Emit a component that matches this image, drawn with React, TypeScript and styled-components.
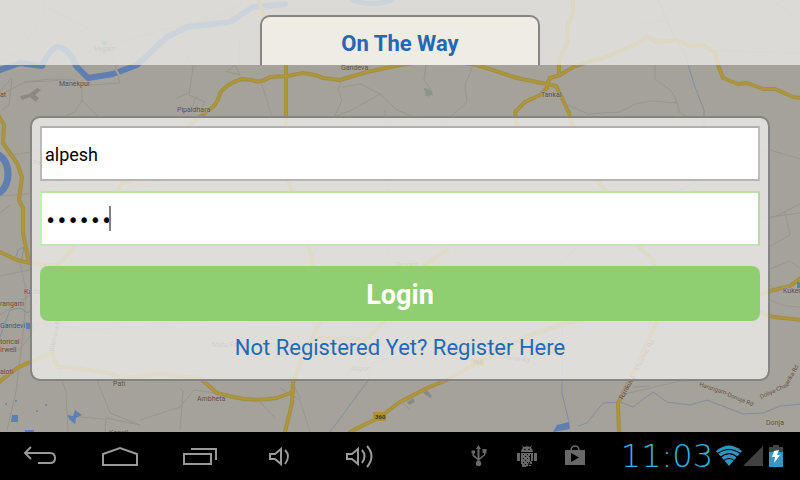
import React, { useState } from "react";
import styled, { createGlobalStyle } from "styled-components";

const GlobalStyle = createGlobalStyle`
  *, *::before, *::after { box-sizing: border-box; }
  body { margin: 0; background: #000; font-family: Roboto, sans-serif; }
`;

const Screen = styled.div`
  min-height: 100vh;
  display: flex;
  flex-direction: column;
`;

const Content = styled.div`
  position: relative;
  flex: 1;
  display: flex;
  flex-direction: column;
  overflow: hidden;
  background: #a5a29a;
`;

const MapSvg = styled.svg`
  position: absolute;
  inset: 0;
  width: 100%;
  height: 100%;
  font-family: Roboto, sans-serif;
`;

const Header = styled.header`
  position: relative;
  display: flex;
  justify-content: center;
  padding-top: 15px;
  background: rgba(233, 232, 229, 0.8);
`;

const TitleTab = styled.h1`
  width: 35%;
  min-width: 200px;
  height: 50px;
  margin: 0;
  padding-top: 2px;
  border: 2px solid #858585;
  border-bottom: 0;
  border-radius: 10px 10px 0 0;
  background: #efece4;
  color: #2169b7;
  font-size: 22px;
  font-weight: 700;
  line-height: 50px;
  text-align: center;
`;

const Panel = styled.form`
  position: relative;
  display: flex;
  flex-direction: column;
  margin: 51px 30px;
  padding: 8px 8px 14px;
  border: 2px solid #858585;
  border-radius: 10px;
  background: rgba(236, 236, 234, 0.8);
  background-clip: padding-box;
`;

const Field = styled.label`
  position: relative;
  display: flex;
  margin-bottom: 10px;
`;

const TextInput = styled.input<{ $active?: boolean }>`
  width: 100%;
  height: 55px;
  padding: 2px 3px 0;
  border: 2px solid;
  border-color: ${(p) => (p.$active ? "#b9e0a8 #b5dba4 #c2e5b3 #c6efb6" : "#b0b0b0 #bcbcbc #b4b4b4 #b8b8b8")};
  border-radius: 0;
  outline: 0;
  background: #fff;
  color: #000;
  caret-color: transparent;
  font-family: ${(p) => (p.$active ? '"DejaVu Sans"' : "Roboto")}, sans-serif;
  font-size: ${(p) => (p.$active ? "19px" : "18px")};
`;

const Caret = styled.span`
  position: absolute;
  left: 69px;
  top: 15px;
  width: 2px;
  height: 25px;
  background: #808080;
`;

const LoginButton = styled.button`
  height: 55px;
  margin-top: 10px;
  padding: 2px 0 0;
  border: 0;
  border-radius: 8px;
  background: #8fcf72;
  color: #fff;
  font-family: Roboto, sans-serif;
  font-size: 27px;
  font-weight: 700;
`;

const RegisterLink = styled.a`
  align-self: center;
  margin-top: 10px;
  color: #2169b7;
  font-size: 22px;
  line-height: 34px;
  text-decoration: none;
`;

const SystemBar = styled.footer`
  display: flex;
  align-items: center;
  justify-content: space-between;
  height: 48px;
  background: #000;
`;

const NavKeys = styled.nav`
  display: flex;
`;

const NavKey = styled.button`
  display: grid;
  place-items: center;
  width: 80px;
  height: 48px;
  padding: 0;
  border: 0;
  background: none;
  color: #999;
`;

const Status = styled.div`
  display: flex;
  align-items: center;
  padding-right: 17px;
  color: #686868;
`;

const Notice = styled.span`
  display: grid;
  place-items: center;
  width: 48px;
  height: 48px;
`;

const Clock = styled.time`
  width: 116px;
  padding-right: 2px;
  color: #33b5e5;
  font-family: "DejaVu Sans Light", "DejaVu Sans ExtraLight", "DejaVu Sans", sans-serif;
  font-size: 32px;
  font-weight: 200;
  line-height: 48px;
  text-align: right;
`;

const Battery = styled.svg`
  margin-left: 6px;
`;

const yellowRoads = [
  "M-3 113L4 125L3 143L17 163L22 177L19 200L23 208L23 233L29 263",
  "M0 252L17 260L30 263L47 265L58 265L72 250L95 215L117 192L122 183L133 180L160 158L187 127L200 117L213 107Q218 102 220 93Q226 84 242 79L252 80Q260 84 270 77L287 76L303 73Q318 75 323 78L340 80L367 72L400 65L440 60L477 65L517 78L547 84L556 86L562 98L569 113L573 127L597 180L607 192L638 246L653 260L657 290L657 322L648 340L630 380L618 403L619 432",
  "M547 84L550 78L560 75L575 66L608 56L640 42L647 36L656 42L677 40L690 46L703 45L715 53L718 65L723 78L738 84L747 83L763 89L775 89L793 97L802 98",
  "M559 74L559 60L568 42L567 27L573 13L573 0",
  "M547 84L547 88L540 95L525 102L515 112L517 127",
  "M259 0L263 15L286 50L286 115L288 180L310 250L318 290L320 322L300 363L293 383L292 403L285 432",
  "M-2 383L17 368L30 362L52 353L57 367L67 367L110 373L123 378L160 374L200 378L217 393L233 397Q253 402 277 398L293 392",
  "M318 338L367 339L383 322L423 266L447 250",
  "M350 432L380 417L400 402L427 388L447 380L477 363L530 335L570 322L650 308L760 295L770 291L790 286L802 277",
  "M740 303L760 312L773 317L802 320",
];

const greyRoads = [
  "M0 95L25 82L50 81L62 80M25 82L50 79L75 80M90 85L120 83L117 72L110 45M82 87L82 100L75 112L66 116M82 100L100 119L120 135",
  "M110 45L90 30L62 15L42 6M43 0L44 15L20 50L0 62M110 45L170 28L215 18L240 5",
  "M186 55L193 67L189 95L205 102L200 112M190 92L177 98M196 96L193 106M240 35L239 60",
  "M226 72L235 65L240 75L228 72M0 91L12 78L9 105L2 110",
  "M262 85L272 117M342 78L338 90L342 100L335 116M343 87L361 84L380 94L397 110L428 123M380 94L352 110L337 116",
  "M426 65L424 80L432 92L428 98M472 68L465 85L467 102L455 113L440 125",
  "M655 65L655 79L670 90L675 97L680 113L686 116M568 105L588 114L620 112L635 104L650 101L677 103",
  "M0 157L30 152L80 142M0 196L28 194L70 180M0 213L10 205M70 150L280 142M85 207L180 175L320 168",
  "M0 276L29 270M20 262L26 290L24 325L21 350L16 392L7 430M0 315L30 295L35 330L19 350M22 322L90 330L220 320L390 325",
  "M57 367L66 392L68 432M97 380L105 400L110 413L140 425L106 418L105 432M140 420L180 407L194 390L230 395M81 417L104 419",
  "M280 388L300 400L310 432M293 383L300 398M275 418L260 402M400 400L410 410M720 152L770 150L800 159M740 218L770 217L800 213M720 228L770 219L800 204M763 250L790 235L785 212M770 300L785 306L800 307",
  "M620 395L655 387L680 381L760 380M633 387L650 386M610 0L630 15L638 25L665 20M775 2L800 20M715 50L750 52L800 53",
  "M55 228L120 238L260 226L350 235M180 430L183 391L180 388M385 110L390 280L350 340M770 269L790 261L800 268M770 285L779 293",
];

const thinStreams = [
  "M658 0L673 33L685 55L695 87L704 110L704 140",
  "M578 426L587 423L603 403L620 402L633 407L653 392L667 402L690 405L707 400L743 414L763 413L780 406L802 404",
  "M562 327L562 393L569 422",
  "M330 432L367 382L373 363L388 358",
  "M0 337L10 310L20 308L28 313L38 300",
  "M16 256L18 250L24 247L22 258",
  "M520 295L580 246L640 210L700 180",
];

type Label = [text: string, x: number, y: number, size?: number];
const labels: Label[] = [
  ["Manekpur", 59, 86, 7], ["Vegam", 94, 51, 7], ["Pipaldhara", 177, 112, 7], ["Gandeva", 341, 70, 7],
  ["Tankal", 541, 97, 7], ["at", 0, 97, 7], ["Kadia", 24, 294, 7], ["rangam", 0, 306, 7],
  ["torical", 0, 344, 7], ["irwell", 0, 352, 7], ["aloti", 0, 374, 7], ["Pati", 113, 386, 7],
  ["Ambheta", 197, 401, 7], ["Kangli", 109, 435, 7], ["Matu Faliya", 212, 347, 7], ["Alipor", 351, 371, 7],
  ["Degam", 396, 267, 7], ["Kukeri", 783, 293, 7], ["Donja", 766, 425, 7], ["Pa", 33, 165, 7],
];

const MapBackdrop = () => (
  <MapSvg viewBox="0 0 800 432" preserveAspectRatio="xMidYMid slice" aria-hidden="true">
    <g fill="none" strokeLinejoin="round" strokeLinecap="round">
      {greyRoads.map((d) => <path key={d} d={d} stroke="#98958e" strokeWidth="1" />)}
      {thinStreams.map((d) => <path key={d} d={d} stroke="#838da2" strokeWidth="1" />)}
      <path d="M-3 71L20 63L42 66Q51 47 58 47Q69 48 76 66L88 78L113 74L137 65L167 37L187 27L230 22L253 7L285 4" stroke="#5f7fb2" strokeWidth="6" />
      <path d="M352 0Q370 7 392 0" stroke="#5f7fb2" strokeWidth="5" />
      <ellipse cx="-6" cy="174" rx="14" ry="20" stroke="#5f7fb2" strokeWidth="7" />
      {yellowRoads.map((d) => <path key={d} d={d} stroke="#a08e4b" strokeWidth="4" />)}
      {yellowRoads.map((d) => <path key={d} d={d} stroke="#b09635" strokeWidth="2" />)}
      <path d="M116 70L119 75" stroke="#a5a29a" strokeWidth="2" />
    </g>
    <g fill="#5f7fb2">
      <path d="M100 40L109 42L104 46ZM12 415H18V422H11ZM67 415L73 416L75 410L82 415L76 418L75 424L70 420ZM25 430H34V433H25ZM553 432L557 425L569 422L570 429ZM26 323H33V329H26ZM797 282H800V288H797Z" />
      <circle cx="6" cy="404" r="1" /><circle cx="16" cy="401" r="1" /><circle cx="37" cy="411" r="1" /><circle cx="46" cy="405" r="1" />
    </g>
    <path d="M20 96L29 94L37 88L41 90L35 95L39 98L36 102L30 97L22 100Z" fill="#8d8982" />
    <path d="M424 88L431 90L433 95L426 96Z" fill="#8a9584" />
    <path d="M407 402L413 398L415 402L409 405ZM423 393L427 390L432 396L430 398Z" fill="#8d8983" />
    <g fill="#5d4f3e" stroke="#aaa69e" strokeWidth="1" paintOrder="stroke">
      {labels.map(([text, x, y, size]) => <text key={text} x={x} y={y} fontSize={size}>{text}</text>)}
      <text x="0" y="328" fontSize="7" fill="#31577f">Gandevi</text>
      <text transform="translate(54 352) rotate(-79)" fontSize="7">Bilimora-Nav</text>
      <text transform="translate(623 400) rotate(-62)" fontSize="7">Rankuva - Khudvel Rd</text>
      <text transform="translate(699 386) rotate(18)" fontSize="6">Harangam-</text>
      <text transform="translate(727 396) rotate(22)" fontSize="6">Donuja Rd</text>
      <text transform="translate(761 399) rotate(-25)" fontSize="6">Doliya-Chak</text>
      <text transform="translate(788 385) rotate(-60)" fontSize="6">arika Rd</text>
      <text transform="translate(503 359) rotate(8)" fontSize="6">Harish Rd</text>
    </g>
    <rect x="373" y="412" width="13" height="9" fill="#ad922f" />
    <text x="375" y="419" fontSize="6" fontWeight="700" fill="#3b341f">360</text>
    <rect x="471" y="358" width="13" height="8" fill="#ad922f" />
    <text x="473" y="364" fontSize="6" fill="#3b341f">360</text>
  </MapSvg>
);

const BackIcon = () => (
  <svg width="34" height="20" viewBox="0 0 34 20" fill="none" stroke="currentColor" strokeWidth="2">
    <path d="M2 7H27Q32 7 32 12Q32 17 27 17H15M8 1L2 7L8 13" />
  </svg>
);
const HomeIcon = () => (
  <svg width="36" height="20" viewBox="0 0 36 20" fill="none" stroke="currentColor" strokeWidth="2">
    <path d="M1 8L18 2L35 8V19H1Z" />
  </svg>
);
const RecentIcon = () => (
  <svg width="34" height="18" viewBox="0 0 34 18" fill="none" stroke="currentColor" strokeWidth="2">
    <path d="M1 7H28V17H1ZM8 2H33V13" />
  </svg>
);
const VolumeIcon = ({ loud = false }: { loud?: boolean }) => (
  <svg width="32" height="24" viewBox="0 0 32 24" fill="none" stroke="currentColor" strokeWidth="2">
    <path d={loud ? "M3 10H8L14 5V20L8 15H3Z" : "M6 10H11L17 5V20L11 15H6Z"} />
    <path d={loud ? "M18 6Q23 12 18 19M23 2Q32 12 23 23" : "M21 6Q27 12 21 20"} />
  </svg>
);
const UsbIcon = () => (
  <svg width="16" height="22" viewBox="0 0 16 22" fill="currentColor">
    <path d="M5 4L7.500 0L10 4H8.500V13L13 9.500V8H11.500V4H15.500V8H14.500V10L8.500 15V18H6.500V15L1.500 11V8.500H.5V5.500H4V8.500H3V10L6.500 13V4Z" />
    <circle cx="7.500" cy="18.500" r="2.700" />
  </svg>
);
const AndroidIcon = () => (
  <svg width="22" height="24" viewBox="0 0 22 24" fill="currentColor">
    <path d="M6 1L8 3Q11 1.500 14 3L16 1L15 4Q17 5 17 8H5Q5 5 7 4ZM1 9H4V17H1ZM18 9H21V17H18ZM5 9H17V17L13 18L12 22L9 23H6V20H5Z" />
    <g fill="#000">
      <circle cx="9" cy="5.500" r=".8" /><circle cx="13" cy="5.500" r=".8" />
      <path d="M7 10H8V11H7ZM11 10H12V11H11ZM9 12H10V13H9ZM13 12H14V13H13ZM7 14H8V15H7ZM11 14H12V15H11ZM9 16H10V17H9ZM7 18H8V19H7ZM11 18H12V19H11ZM9 20H10V21H9ZM14 10H15V17H14Z" />
    </g>
    <path d="M14 18H16V20H14ZM13 21H15V22H13Z" />
  </svg>
);
const ShopIcon = () => (
  <svg width="20" height="22" viewBox="0 0 20 22">
    <path d="M6 6Q6 1 10 1Q14 1 14 6" fill="none" stroke="currentColor" strokeWidth="1.500" />
    <path d="M0 5H20V20H0Z" fill="currentColor" />
    <path d="M6 8L14 12.500L6 17Z" fill="#000" />
  </svg>
);
const WifiIcon = () => (
  <svg width="28" height="22" viewBox="0 0 28 22">
    <path d="M1 6Q14 -5 27 6L14 21Z" fill="#2e93bd" />
    <path d="M2 9Q14 0 26 9M5 12.500Q14 5 23 12.500M8 16Q14 11 20 16" fill="none" stroke="#000" strokeWidth="1.200" />
  </svg>
);
const SignalIcon = () => (
  <svg width="20" height="20" viewBox="0 0 20 20"><path d="M20 0V20H0Z" fill="#414141" /></svg>
);

export default function App() {
  const [user, setUser] = useState("alpesh");
  const [password, setPassword] = useState("secret");
  return (
    <Screen>
      <GlobalStyle />
      <Content>
        <MapBackdrop />
        <Header><TitleTab>On The Way</TitleTab></Header>
        <Panel onSubmit={(e) => e.preventDefault()}>
          <Field>
            <TextInput aria-label="Username" value={user} onChange={(e) => setUser(e.target.value)} />
          </Field>
          <Field>
            <TextInput $active type="password" aria-label="Password" value={password} onChange={(e) => setPassword(e.target.value)} />
            <Caret />
          </Field>
          <LoginButton type="submit">Login</LoginButton>
          <RegisterLink href="#register">Not Registered Yet? Register Here</RegisterLink>
        </Panel>
      </Content>
      <SystemBar>
        <NavKeys>
          <NavKey aria-label="Back"><BackIcon /></NavKey>
          <NavKey aria-label="Home"><HomeIcon /></NavKey>
          <NavKey aria-label="Recent apps"><RecentIcon /></NavKey>
          <NavKey aria-label="Volume down"><VolumeIcon /></NavKey>
          <NavKey aria-label="Volume up"><VolumeIcon loud /></NavKey>
        </NavKeys>
        <Status>
          <Notice><UsbIcon /></Notice>
          <Notice><AndroidIcon /></Notice>
          <Notice><ShopIcon /></Notice>
          <Clock>11:03</Clock>
          <WifiIcon />
          <SignalIcon />
          <Battery width="14" height="22" viewBox="0 0 14 22">
            <path d="M4 0H10V2H14V8H0V2H4Z" fill="#444" />
            <path d="M0 7H14V22H0Z" fill="#3698c1" />
            <path d="M5 6L10 5L8 10H11L5 18L6 12H3Z" fill="#fff" />
          </Battery>
        </Status>
      </SystemBar>
    </Screen>
  );
}
